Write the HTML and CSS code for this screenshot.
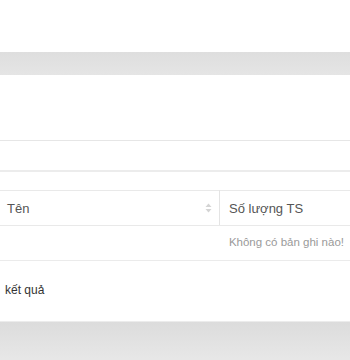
FILE: index.html
```html
<html>
<head>
    <meta charset="UTF-8">
    <meta name="viewport" content="width=device-width, initial-scale=1.0">
    <title>Danh sách</title>
    <link rel="stylesheet" href="styles.css">
</head>
<body>
    <div class="toolbar"></div>

    <div class="filter-row"></div>
    <div class="filter-gap"></div>

    <table class="grid">
        <thead>
            <tr>
                <th class="col-name">
                    <div class="th-inner">
                        <span>Tên</span>
                        <svg class="sort" width="7" height="10" viewBox="0 0 7 10">
                            <path d="M3.5 0.5 L6.5 4 L0.5 4 Z" fill="#d4d4d4"/>
                            <path d="M3.5 9.5 L6.5 6 L0.5 6 Z" fill="#d4d4d4"/>
                        </svg>
                    </div>
                </th>
                <th class="col-qty">Số lượng TS</th>
            </tr>
        </thead>
        <tbody>
            <tr>
                <td class="empty" colspan="2">Không có bản ghi nào!</td>
            </tr>
        </tbody>
    </table>

    <div class="summary">kết quả</div>

    <div class="footer"></div>
</body>
</html>
```

FILE: styles.css
```css
body {
    margin: 0;
    background: #fff;
    font-family: 'Liberation Sans', Arial, Helvetica, sans-serif;
    font-size: 12px;
    color: #333;
    overflow: hidden;
}

.toolbar {
    margin-top: 52px;
    height: 23px;
    background: linear-gradient(to bottom, #dedede, #e5e5e5);
}

.filter-row {
    height: 65px;
    border-bottom: 1px solid #e6e6e6;
}

.filter-gap {
    height: 29px;
    border-bottom: 2px solid #ececec;
}

.grid {
    margin-top: 18px;
    width: 420px;
    border-collapse: collapse;
    table-layout: fixed;
}

.grid th {
    height: 35px;
    padding: 0 7px;
    text-align: left;
    font-weight: normal;
    font-size: 13px;
    color: #555;
    border-top: 1px solid #e9e9e9;
    border-bottom: 1px solid #e9e9e9;
}

.col-name {
    width: 205px;
    border-right: 1px solid #e4e4e4;
}

.col-qty {
    padding-left: 9px !important;
}

.th-inner {
    display: flex;
    align-items: center;
    justify-content: space-between;
}

.empty {
    height: 35px;
    padding: 0 76px 3px 0;
    text-align: right;
    color: #9a9a9a;
    font-size: 11.5px;
    border-bottom: 1px solid #ebebeb;
}

.summary {
    height: 60px;
    line-height: 58px;
    padding-left: 5px;
    font-size: 12px;
    color: #333;
}

.footer {
    height: 40px;
    border-top: 1px solid #ececec;
    background: linear-gradient(to bottom, #dcdcdc, #e8e8e8);
}
```
